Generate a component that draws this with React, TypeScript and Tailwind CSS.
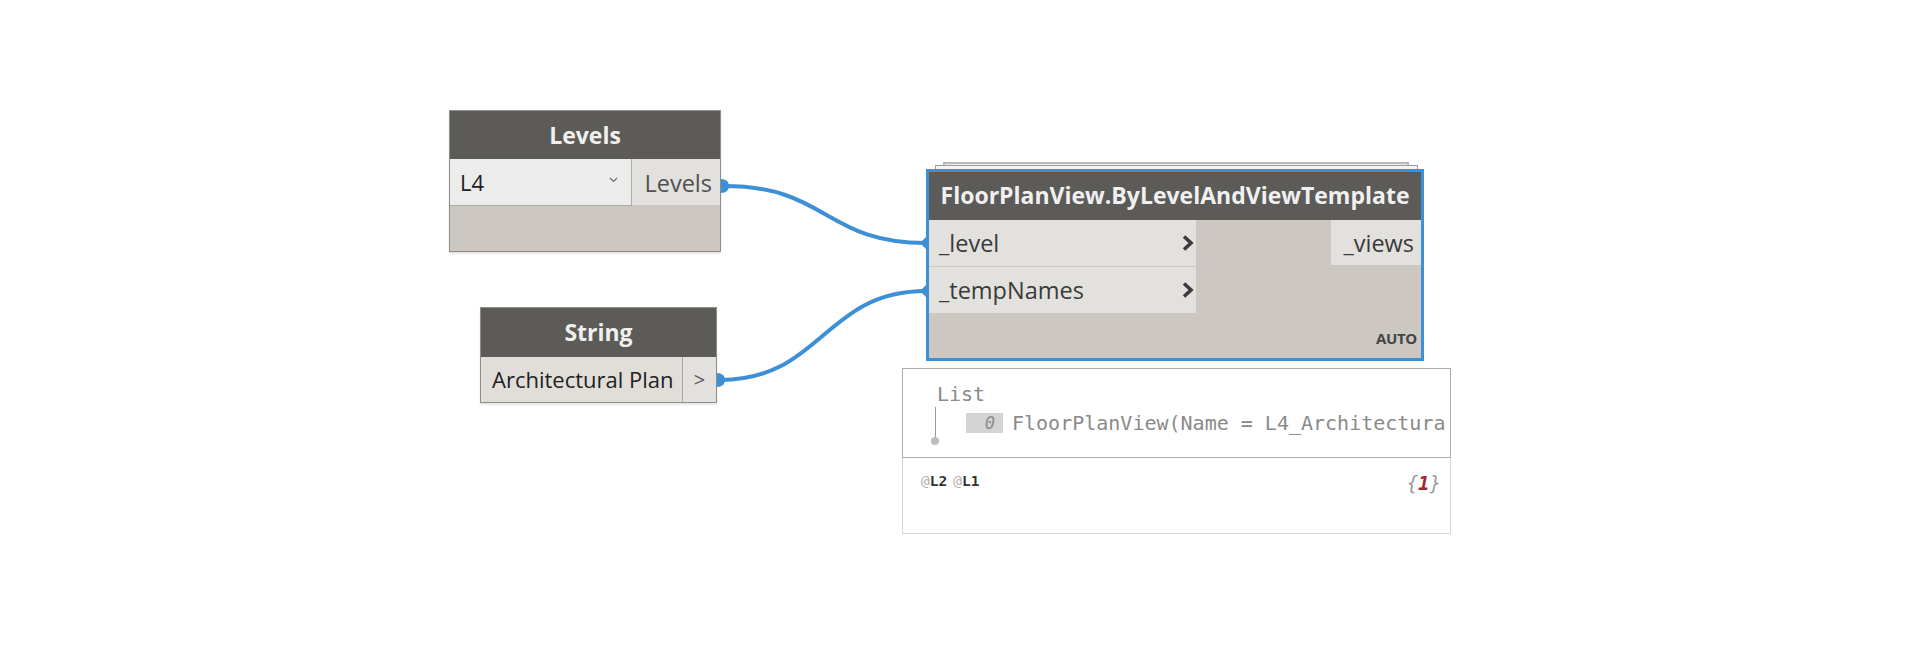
import React from "react";

const WIRE = "#3d8fd6";

function Chevron() {
  return (
    <svg width="14" height="18" viewBox="0 0 14 18" className="shrink-0">
      <path d="M3 2.5 L10 9 L3 15.5" fill="none" stroke="#3b3b3b" strokeWidth="3.6" strokeLinejoin="miter" />
    </svg>
  );
}

function SmallDown() {
  return (
    <svg width="9" height="6" viewBox="0 0 9 6" className="shrink-0">
      <path d="M1 1 L4.5 4.5 L8 1" fill="none" stroke="#6a6a6a" strokeWidth="1.2" />
    </svg>
  );
}

function LevelsNode() {
  return (
    <div className="absolute left-[449px] top-[110px] w-[272px] border border-[#8f8d89] shadow-[0_2px_2px_rgba(0,0,0,0.10)]">
      <div className="h-[48px] bg-[#5c5b58] flex items-center justify-center text-[23px] font-bold text-[#f0f0f0] leading-none">
        Levels
      </div>
      <div className="h-[47px] flex bg-[#ccc8c1]">
        <div className="w-[182px] shrink-0 bg-[#ececec] border-r border-b border-[#ababab] flex items-center pl-[10px] pr-[13px] text-[22px] text-[#222] leading-none">
          <span>L4</span>
          <span className="ml-auto mt-[-4px]">
            <SmallDown />
          </span>
        </div>
        <div className="flex-1 h-[46px] bg-[#e3e1dd] flex items-center justify-end pr-[8px] pt-[3px] text-[23.5px] text-[#505050] leading-none">
          Levels
        </div>
      </div>
      <div className="h-[45px] bg-[#ccc8c1]" />
    </div>
  );
}

function StringNode() {
  return (
    <div className="absolute left-[480px] top-[307px] w-[237px] border border-[#8f8d89] shadow-[0_2px_2px_rgba(0,0,0,0.10)]">
      <div className="h-[49px] bg-[#5c5b58] flex items-center justify-center text-[23px] font-bold text-[#f0f0f0] leading-none">
        String
      </div>
      <div className="h-[45px] flex bg-[#e3e1dd]">
        <div className="w-[202px] shrink-0 bg-[#e1ded9] border-r border-[#a9a7a3] flex items-center pl-[11px] pb-[1px] text-[22px] text-[#222] leading-none whitespace-nowrap">
          Architectural Plan
        </div>
        <div className="flex-1 flex items-center justify-center text-[20px] text-[#555] leading-none">
          &gt;
        </div>
      </div>
    </div>
  );
}

function FloorPlanNode() {
  return (
    <>
      {/* stacked copies behind the node */}
      <div className="absolute left-[943px] top-[162px] w-[466px] h-[24px] border-2 border-[#b9b9b9] bg-[#eeeeee]" />
      <div className="absolute left-[935px] top-[165px] w-[483px] h-[24px] border border-[#9d9d9d] bg-[#f4f4f4]" />
      <div className="absolute left-[926px] top-[169px] w-[498px] border-[3px] border-[#3d8fd6] bg-[#ccc8c1]">
        <div className="h-[48px] bg-[#5c5b58] flex items-center justify-center text-[23px] font-bold text-[#f0f0f0] leading-none pb-[1px] whitespace-nowrap">
          FloorPlanView.ByLevelAndViewTemplate
        </div>
        <div className="flex h-[138px]">
          <div className="w-[267px] shrink-0 flex flex-col">
            <div className="h-[46px] bg-[#e3e1dd] flex items-center pl-[10px] pr-[1px] text-[23.5px] text-[#3a3a3a] leading-none">
              <span className="pt-[2px]">_level</span>
              <span className="ml-auto">
                <Chevron />
              </span>
            </div>
            <div className="h-px bg-[#cbc7c1]" />
            <div className="h-[46px] bg-[#e3e1dd] flex items-center pl-[10px] pr-[1px] text-[23.5px] text-[#3a3a3a] leading-none">
              <span className="pt-[2px]">_tempNames</span>
              <span className="ml-auto">
                <Chevron />
              </span>
            </div>
          </div>
          <div className="flex-1" />
          <div className="w-[90px] shrink-0 flex flex-col">
            <div className="h-[45px] bg-[#e3e1dd] flex items-center justify-end pr-[7px] text-[23.5px] text-[#3a3a3a] leading-none">
              <span className="pt-[3px]">_views</span>
            </div>
            <div className="flex-1 flex items-end justify-end pr-[4px] pb-[12px] text-[15px] font-bold text-[#444] leading-none tracking-[-0.3px]">
              AUTO
            </div>
          </div>
        </div>
      </div>
    </>
  );
}

function Preview() {
  const mono = "font-['DejaVu_Sans_Mono','Liberation_Mono',monospace]";
  return (
    <div className="absolute left-[902px] top-[368px] w-[549px]">
      <div className="h-[90px] border border-[#acacac] bg-white overflow-hidden">
        <div className={`${mono} pl-[34px] pt-[13px] h-[38px] text-[20px] leading-[24px] text-[#8a8a8a]`}>List</div>
        <div className="flex pl-[25px]">
          <div className="w-[14px] shrink-0 flex flex-col items-center">
            <div className="w-px h-[33px] bg-[#9a9a9a]" />
            <div className="w-[8px] h-[8px] rounded-full bg-[#bdbdbd] -mt-[3px]" />
          </div>
          <div className="ml-[24px] mt-[6px] h-[20px] flex items-center whitespace-nowrap shrink-0">
            <div className={`${mono} w-[37px] h-[20px] shrink-0 bg-[#d4d4d4] flex items-center justify-end pr-[8px] text-[17px] italic text-[#8c8c8c] leading-none`}>
              0
            </div>
            <div className={`${mono} shrink-0 ml-[9px] text-[20px] leading-none text-[#8a8a8a]`}>
              FloorPlanView(Name = L4_Architectura
            </div>
          </div>
        </div>
      </div>
      <div className="h-[76px] border border-t-0 border-[#d6d6d6] bg-white flex items-start justify-between pl-[18px] pr-[9px] pt-[13px]">
        <div className={`${mono} text-[14.5px] leading-[20px] flex gap-[6px]`}>
          <span>
            <span className="text-[#b0b0b0]">@</span>
            <span className="font-bold text-[#333]">L2</span>
          </span>
          <span>
            <span className="text-[#b0b0b0]">@</span>
            <span className="font-bold text-[#333]">L1</span>
          </span>
        </div>
        <div className={`${mono} italic text-[19px] leading-[20px] pt-[2px] text-[#9a9a9a]`}>
          {"{"}
          <span className="text-[#a3262a] font-bold">1</span>
          {"}"}
        </div>
      </div>
    </div>
  );
}

function Wires() {
  return (
    <svg className="absolute inset-0 pointer-events-none" width="1920" height="652" viewBox="0 0 1920 652">
      <path d="M724 186 C828 186 824 243 926 243" fill="none" stroke={WIRE} strokeWidth="4" />
      <path d="M720 380 C822 380 824 291 926 291" fill="none" stroke={WIRE} strokeWidth="4" />
      {/* output ports */}
      <path d="M721 179 C726 179 729 182 729 186 C729 190 726 193 721 193 Z" fill={WIRE} />
      <path d="M717 373 C722 373 725 376 725 380 C725 384 722 387 717 387 Z" fill={WIRE} />
      {/* input ports */}
      <path d="M927 236 L920 243 L927 250 Z" fill={WIRE} />
      <path d="M927 284 L920 291 L927 298 Z" fill={WIRE} />
    </svg>
  );
}

export default function App() {
  return (
    <div className="relative w-[1920px] h-[652px] bg-white overflow-hidden font-['Open_Sans',sans-serif]">
      <LevelsNode />
      <StringNode />
      <FloorPlanNode />
      <Preview />
      <Wires />
    </div>
  );
}
